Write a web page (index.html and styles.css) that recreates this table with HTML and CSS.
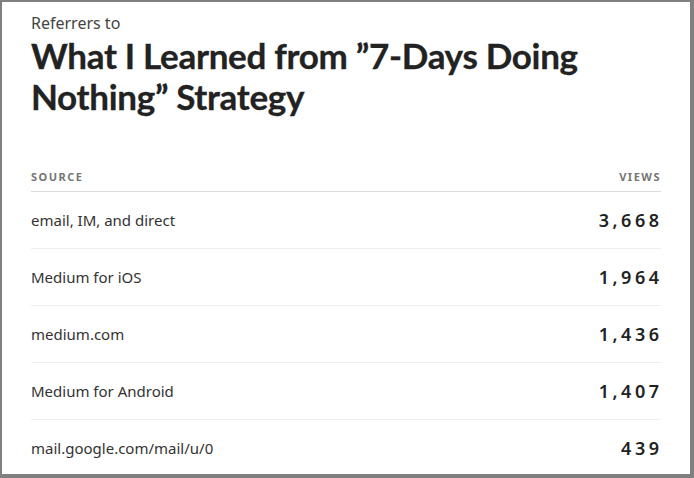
FILE: index.html
```html
<!DOCTYPE html>
<html>
<head>
<meta charset="utf-8">
<link rel="stylesheet" href="styles.css">
</head>
<body>
<div class="frame">
  <div class="sub">Referrers to</div>
  <h1 class="title">What I Learned from ”7-Days Doing Nothing” Strategy</h1>
  <table class="tbl">
    <thead>
      <tr><th class="src">Source</th><th class="views"><span class="num">Views</span></th></tr>
    </thead>
    <tbody>
      <tr><td class="src">email, IM, and direct</td><td class="views"><span class="num">3,668</span></td></tr>
      <tr><td class="src">Medium for iOS</td><td class="views"><span class="num">1,964</span></td></tr>
      <tr><td class="src">medium.com</td><td class="views"><span class="num">1,436</span></td></tr>
      <tr><td class="src">Medium for Android</td><td class="views"><span class="num">1,407</span></td></tr>
      <tr><td class="src">mail.google.com/mail/u/0</td><td class="views"><span class="num">439</span></td></tr>
    </tbody>
  </table>
</div>
</body>
</html>
```
FILE: styles.css
```css
html, body {
  margin: 0;
  padding: 0;
  background: #ffffff;
}
.frame {
  width: 694px;
  height: 478px;
  box-sizing: border-box;
  border-style: solid;
  border-color: #808080;
  border-width: 2px 4px 4px 2px;
  padding: 9px 29px 0 29px;
  overflow: hidden;
  font-family: "Noto Sans", "Open Sans", sans-serif;
  color: #333;
}
.sub {
  font-size: 16px;
  line-height: 24px;
  color: #444;
}
.title {
  margin: 0;
  font-family: Lato, sans-serif;
  font-weight: 700;
  font-size: 35px;
  line-height: 41px;
  color: #222;
  letter-spacing: -0.3px;
  -webkit-text-stroke: 0.3px #222;
}
.tbl {
  width: 100%;
  border-collapse: collapse;
  margin-top: 53px;
}
.tbl th {
  font-size: 11px;
  font-weight: 700;
  letter-spacing: 1.5px;
  text-transform: uppercase;
  color: #757575;
  padding: 0 0 7px 0;
  border-bottom: 1px solid #dcdcdc;
  line-height: 14px;
}
.tbl td {
  height: 56px;
  padding: 0;
  border-bottom: 1px solid #efefef;
  vertical-align: middle;
}
.src { text-align: left; }
.views { text-align: right; }
td.src {
  font-size: 15px;
  color: #333;
}
td.views {
  font-size: 18px;
  font-weight: 600;
  letter-spacing: 3.5px;
  color: #222;
}
td.views .num {
  margin-right: -1.5px;
}
```
